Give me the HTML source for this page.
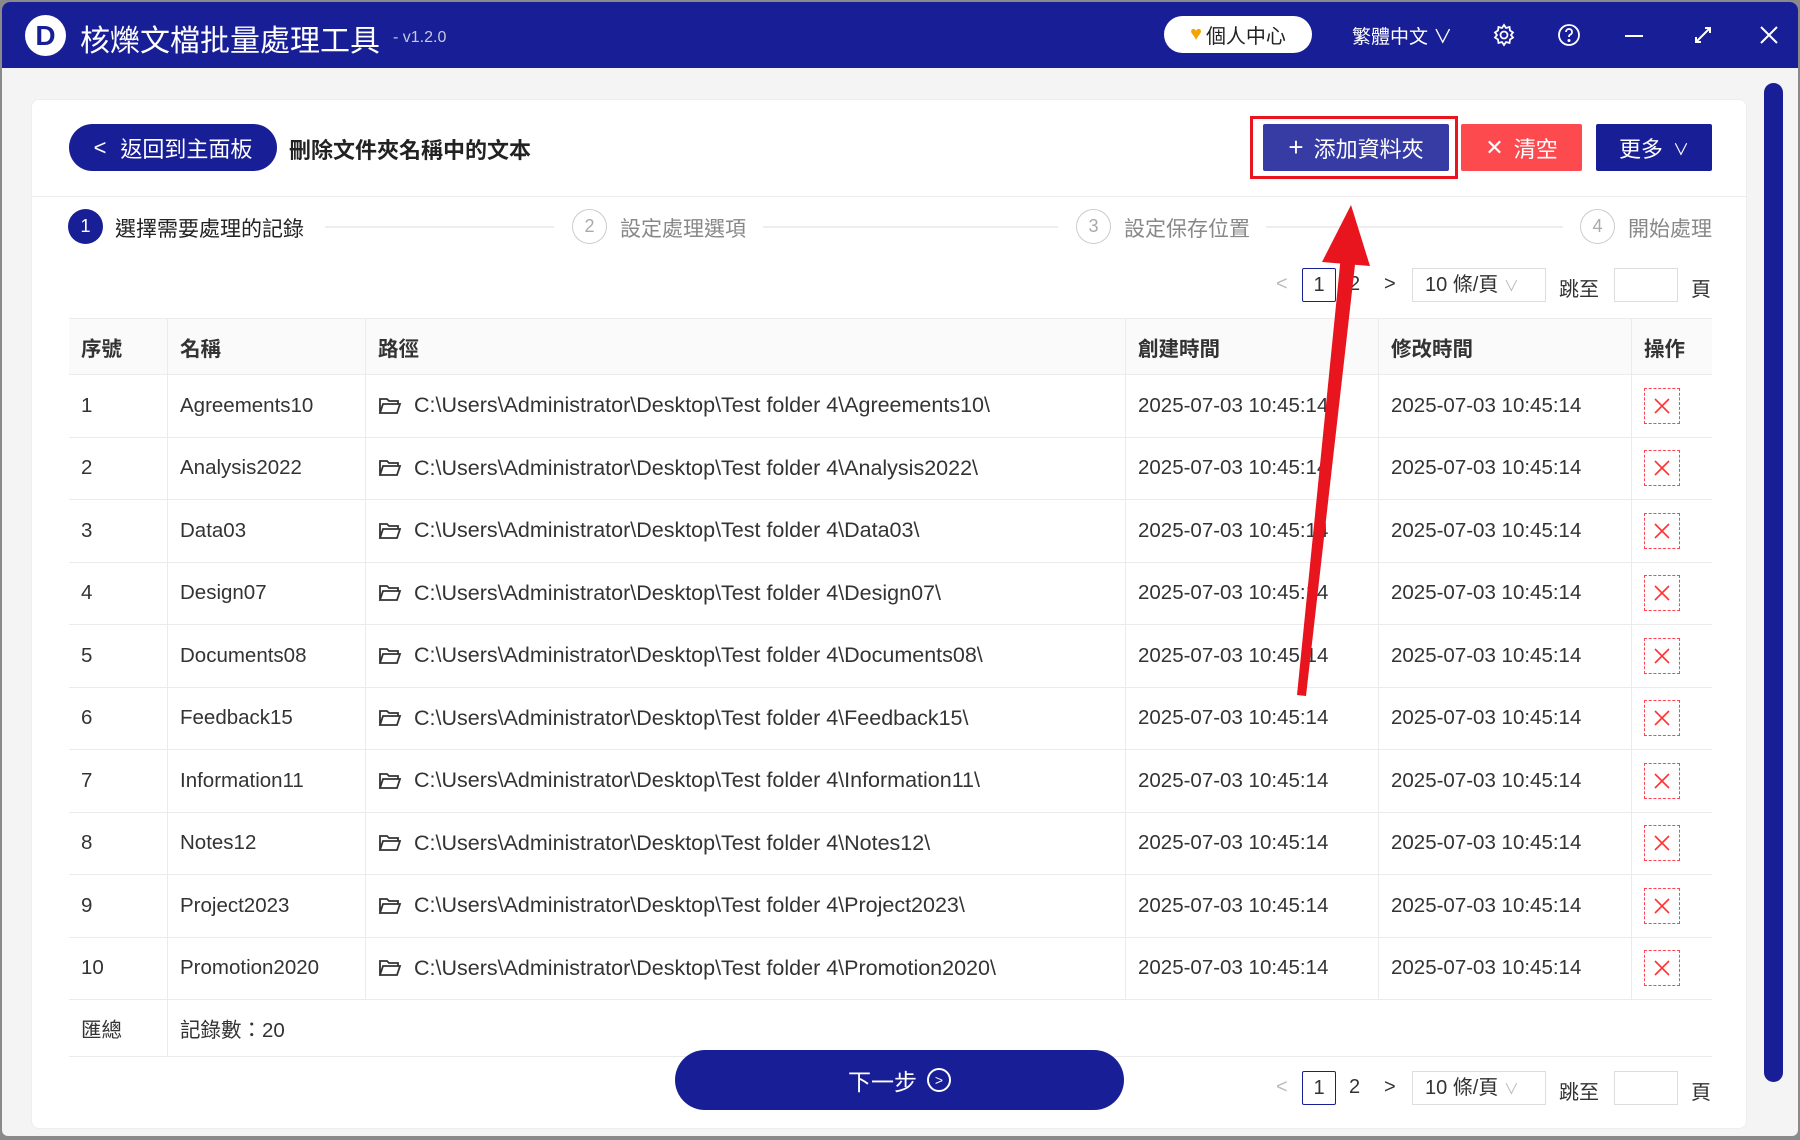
<!DOCTYPE html><html><head><meta charset="utf-8"><style>
*{box-sizing:border-box;margin:0;padding:0}
body{width:1800px;height:1140px;overflow:hidden;background:#8a8a8a;font-family:"Liberation Sans","Noto Sans CJK TC",sans-serif;color:#333;position:relative}
.win{position:absolute;left:2px;top:2px;width:1796px;height:1134px;background:#f4f4f4;border-radius:8px 8px 6px 6px;overflow:hidden}
.tb{position:absolute;left:0;top:0;width:100%;height:66px;background:#181e96;color:#fff}
.abs{position:absolute}
.card{position:absolute;left:29px;top:97px;width:1716px;height:1030px;background:#fff;border-radius:8px;border:1px solid #eee}
.btn{position:absolute;color:#fff;font-size:22px;display:flex;align-items:center;justify-content:center}
.row{position:absolute;left:69px;width:1643px;border-bottom:1px solid #ebebeb;font-size:20.5px}
.c{position:absolute;top:0;height:100%;display:flex;align-items:center;border-right:1px solid #ebebeb;white-space:nowrap}
.del{width:36px;height:36px;border:1px dashed #f45;display:flex;align-items:center;justify-content:center}
.pg{position:absolute;font-size:20px;color:#333}
</style></head><body>
<div class="win">
<div class="tb">
 <div class="abs" style="left:23px;top:13px;width:41px;height:41px;border-radius:50%;background:#fff;display:flex;align-items:center;justify-content:center;color:#181e96;font-weight:bold;font-size:28px">D</div>
 <div class="abs" style="left:78px;top:14px;font-size:30px">核爍文檔批量處理工具</div>
 <div class="abs" style="left:391px;top:27px;font-size:16px;color:#c8c8e0">- v1.2.0</div>
 <div class="abs" style="left:1162px;top:14px;width:148px;height:37px;border-radius:19px;background:#fff;color:#222;font-size:20px;display:flex;align-items:center;justify-content:center"><span style="color:#f5a300;margin-right:4px">♥</span>個人中心</div>
 <div class="abs" style="left:1350px;top:20px;font-size:19px">繁體中文 ∨</div>
 <svg class="abs" style="left:1490px;top:21px" width="24" height="24" viewBox="0 0 24 24" fill="none" stroke="#fff" stroke-width="1.8"><circle cx="12" cy="12" r="3.5"/><path d="M12 2l2 3 3.5-1 .5 3.5 3 2-2 2.5 2 2.5-3 2-.5 3.5-3.5-1-2 3-2-3-3.5 1-.5-3.5-3-2 2-2.5-2-2.5 3-2 .5-3.5 3.5 1z"/></svg>
 <svg class="abs" style="left:1555px;top:21px" width="24" height="24" viewBox="0 0 24 24" fill="none" stroke="#fff" stroke-width="1.8"><circle cx="12" cy="12" r="10"/><path d="M9 9a3 3 0 1 1 4 2.8c-1 .4-1 1.2-1 2.2"/><circle cx="12" cy="17.5" r=".6" fill="#fff"/></svg>
 <div class="abs" style="left:1623px;top:33px;width:18px;height:2px;background:#fff"></div>
 <svg class="abs" style="left:1690px;top:22px" width="22" height="22" viewBox="0 0 22 22" stroke="#fff" stroke-width="2" fill="none"><path d="M4 18L18 4M13 4h5v5M4 13v5h5"/></svg>
 <svg class="abs" style="left:1758px;top:24px" width="18" height="18" stroke="#fff" stroke-width="2"><path d="M1 1L17 17M17 1L1 17"/></svg>
</div>
<div class="abs" style="left:1762px;top:81px;width:19px;height:999px;border-radius:10px;background:#181e96"></div>
<div class="card"></div>
</div>
<div class="btn" style="left:69px;top:124px;width:208px;height:47px;border-radius:24px;background:#181e96"><span style="margin-right:14px;font-size:22px">&lt;</span>返回到主面板</div>
<div class="abs" style="left:289px;top:133px;font-size:22px;font-weight:bold;color:#222">刪除文件夾名稱中的文本</div>
<div class="abs" style="left:1250px;top:116px;width:208px;height:63px;border:3px solid #e8141e"></div>
<div class="btn" style="left:1263px;top:124px;width:186px;height:47px;background:#373ca5;border-radius:2px"><span style="margin-right:10px;font-size:26px">+</span>添加資料夾</div>
<div class="btn" style="left:1461px;top:124px;width:121px;height:47px;background:#fc4a4f;border-radius:2px"><span style="margin-right:10px">✕</span>清空</div>
<div class="btn" style="left:1596px;top:124px;width:116px;height:47px;background:#181e96;border-radius:2px">更多<span style="margin-left:10px;font-size:16px">∨</span></div>
<div class="abs" style="left:31px;top:196px;width:1716px;height:1px;background:#ececec"></div>
<div class="abs" style="left:68px;top:209px;width:35px;height:35px;border-radius:50%;background:#181e96;color:#fff;font-size:18px;display:flex;align-items:center;justify-content:center">1</div>
<div class="abs" style="left:115px;top:213px;font-size:21px;color:#222">選擇需要處理的記錄</div>
<div class="abs" style="left:325px;top:226px;width:229px;height:2px;background:#eee"></div>
<div class="abs" style="left:572px;top:209px;width:35px;height:35px;border-radius:50%;border:1px solid #ccc;color:#aaa;font-size:18px;display:flex;align-items:center;justify-content:center">2</div>
<div class="abs" style="left:620px;top:213px;font-size:21px;color:#888">設定處理選項</div>
<div class="abs" style="left:763px;top:226px;width:295px;height:2px;background:#eee"></div>
<div class="abs" style="left:1076px;top:209px;width:35px;height:35px;border-radius:50%;border:1px solid #ccc;color:#aaa;font-size:18px;display:flex;align-items:center;justify-content:center">3</div>
<div class="abs" style="left:1124px;top:213px;font-size:21px;color:#888">設定保存位置</div>
<div class="abs" style="left:1266px;top:226px;width:297px;height:2px;background:#eee"></div>
<div class="abs" style="left:1580px;top:209px;width:35px;height:35px;border-radius:50%;border:1px solid #ccc;color:#aaa;font-size:18px;display:flex;align-items:center;justify-content:center">4</div>
<div class="abs" style="left:1628px;top:213px;font-size:21px;color:#888">開始處理</div>
<div class="pg" style="left:1276px;top:273px;color:#bbb">&lt;</div>
<div class="pg" style="left:1302px;top:268px;width:34px;height:34px;border:1px solid #181e96;border-radius:2px;display:flex;align-items:center;justify-content:center">1</div>
<div class="pg" style="left:1349px;top:273px">2</div>
<div class="pg" style="left:1384px;top:273px">&gt;</div>
<div class="pg" style="left:1412px;top:268px;width:134px;height:34px;border:1px solid #ddd;padding-left:12px;line-height:32px">10 條/頁 <span style="color:#bbb;font-size:15px">∨</span></div>
<div class="pg" style="left:1559px;top:273px">跳至</div>
<div class="pg" style="left:1614px;top:268px;width:64px;height:34px;border:1px solid #ddd"></div>
<div class="pg" style="left:1691px;top:273px">頁</div>
<div class="row" style="top:318px;height:57px;background:#fafafa;font-weight:bold;border-top:1px solid #ebebeb">
 <div class="c" style="left:0;width:99px;padding-left:12px">序號</div><div class="c" style="left:99px;width:198px;padding-left:12px">名稱</div><div class="c" style="left:297px;width:760px;padding-left:12px">路徑</div><div class="c" style="left:1057px;width:253px;padding-left:12px">創建時間</div><div class="c" style="left:1310px;width:253px;padding-left:12px">修改時間</div><div class="c" style="left:1563px;width:80px;padding-left:12px;border-right:none">操作</div>
</div>
<div id="rows"></div>
<div class="row" style="top:1000px;height:57px">
 <div class="c" style="left:0;width:99px;padding-left:12px">匯總</div><div class="c" style="left:99px;width:1544px;padding-left:12px;border-right:none">記錄數：20</div>
</div>
<svg class="abs" style="left:0;top:0" width="1800" height="1140"><path d="M1297 695 L1341 255 L1356 256 L1306 696Z" fill="#e8141e"/><path d="M1351 205 L1322 262 L1370 266Z" fill="#e8141e"/></svg>
<div class="btn" style="left:675px;top:1050px;width:449px;height:60px;border-radius:30px;background:#181e96;font-size:23px">下一步<span style="margin-left:10px;width:24px;height:24px;border:2px solid #fff;border-radius:50%;font-size:14px;display:inline-flex;align-items:center;justify-content:center">&gt;</span></div>
<div class="pg" style="left:1276px;top:1076px;color:#bbb">&lt;</div>
<div class="pg" style="left:1302px;top:1071px;width:34px;height:34px;border:1px solid #181e96;border-radius:2px;display:flex;align-items:center;justify-content:center">1</div>
<div class="pg" style="left:1349px;top:1076px">2</div>
<div class="pg" style="left:1384px;top:1076px">&gt;</div>
<div class="pg" style="left:1412px;top:1071px;width:134px;height:34px;border:1px solid #ddd;padding-left:12px;line-height:32px">10 條/頁 <span style="color:#bbb;font-size:15px">∨</span></div>
<div class="pg" style="left:1559px;top:1076px">跳至</div>
<div class="pg" style="left:1614px;top:1071px;width:64px;height:34px;border:1px solid #ddd"></div>
<div class="pg" style="left:1691px;top:1076px">頁</div>
<script>
var n=["Agreements10","Analysis2022","Data03","Design07","Documents08","Feedback15","Information11","Notes12","Project2023","Promotion2020"],h="";
var fold='<svg width="24" height="20" viewBox="0 0 24 20" fill="none" stroke="#333" stroke-width="1.8" style="margin-right:12px"><path d="M2 17V3h7l2 2h9v3M2 17l3-9h17l-3 9z"/></svg>';
for(var i=0;i<10;i++){var t=375+i*62.5;h+='<div class="row" style="top:'+t+'px;height:62.5px"><div class="c" style="left:0;width:99px;padding-left:12px">'+(i+1)+'</div><div class="c" style="left:99px;width:198px;padding-left:12px">'+n[i]+'</div><div class="c" style="left:297px;width:760px;padding-left:12px;font-size:21.5px">'+fold+'C:\\Users\\Administrator\\Desktop\\Test folder 4\\'+n[i]+'\\</div><div class="c" style="left:1057px;width:253px;padding-left:12px">2025-07-03 10:45:14</div><div class="c" style="left:1310px;width:253px;padding-left:12px">2025-07-03 10:45:14</div><div class="c" style="left:1563px;width:80px;padding-left:12px;border-right:none"><div class="del"><svg width="18" height="18" stroke="#f33" stroke-width="1.6"><path d="M2 2L16 16M16 2L2 16"/></svg></div></div></div>'}
document.getElementById("rows").innerHTML=h;
</script>
</body></html>
